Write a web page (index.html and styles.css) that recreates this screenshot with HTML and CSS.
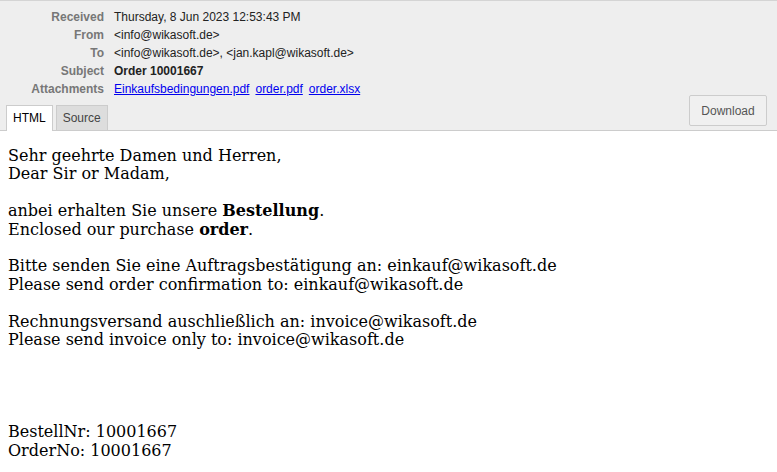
FILE: index.html
```html
<!DOCTYPE html>
<html lang="de">
<head>
<meta charset="utf-8">
<title>Order 10001667</title>
<link rel="stylesheet" href="styles.css">
</head>
<body>
<div class="header">
  <div class="fields">
    <div class="label">Received</div><div class="value">Thursday, 8 Jun 2023 12:53:43 PM</div>
    <div class="label">From</div><div class="value">&lt;info@wikasoft.de&gt;</div>
    <div class="label">To</div><div class="value">&lt;info@wikasoft.de&gt;, &lt;jan.kapl@wikasoft.de&gt;</div>
    <div class="label">Subject</div><div class="value subject">Order 10001667</div>
    <div class="label">Attachments</div><div class="value attachments"><a href="#">Einkaufsbedingungen.pdf</a><a href="#">order.pdf</a><a href="#">order.xlsx</a></div>
  </div>
  <div class="toolbar">
    <div class="tabs">
      <div class="tab active">HTML</div>
      <div class="tab">Source</div>
    </div>
    <button class="download">Download</button>
  </div>
</div>
<div class="message">
Sehr geehrte Damen und Herren,<br>
Dear Sir or Madam,<br>
<br>
anbei erhalten Sie unsere <b>Bestellung</b>.<br>
Enclosed our purchase <b>order</b>.<br>
<br>
Bitte senden Sie eine Auftragsbestätigung an: einkauf@wikasoft.de<br>
Please send order confirmation to: einkauf@wikasoft.de<br>
<br>
Rechnungsversand auschließlich an: invoice@wikasoft.de<br>
Please send invoice only to: invoice@wikasoft.de<br>
<br>
<br>
<br>
<br>
BestellNr: 10001667<br>
OrderNo: 10001667
</div>
</body>
</html>
```

FILE: styles.css
```css
html, body {
  margin: 0;
  padding: 0;
  background: #fff;
}

.header {
  background: #eeeeee;
  border-top: 1px solid #d4d4d4;
  border-bottom: 1px solid #cccccc;
  padding: 7px 10px 0 6px;
  font-family: "Liberation Sans", Arial, sans-serif;
  font-size: 12px;
}

.fields {
  display: grid;
  grid-template-columns: 98px 1fr;
  column-gap: 10px;
  grid-auto-rows: 18px;
  line-height: 18px;
}

.label {
  text-align: right;
  font-weight: bold;
  color: #777;
}

.value {
  color: #222;
}

.subject {
  font-weight: bold;
}

.attachments {
  display: flex;
  gap: 6px;
}

.attachments a {
  color: #0000ee;
  text-decoration: underline;
}

.toolbar {
  display: flex;
  justify-content: space-between;
  align-items: flex-end;
  margin-top: -3px;
}

.tabs {
  display: flex;
  align-items: flex-end;
  gap: 3px;
}

.tab {
  box-sizing: border-box;
  height: 25px;
  padding: 0 6px;
  line-height: 24px;
  border: 1px solid #cccccc;
  border-bottom: none;
  background: #dddddd;
  color: #444;
}

.tab.active {
  height: 26px;
  margin-bottom: -1px;
  line-height: 25px;
  background: #ffffff;
  color: #000;
}

.download {
  box-sizing: border-box;
  width: 78px;
  height: 31px;
  margin-bottom: 4px;
  border: 1px solid #cccccc;
  border-radius: 2px;
  background: #f0f0f0;
  color: #555;
  font-family: "Liberation Sans", Arial, sans-serif;
  font-size: 12px;
  padding: 0;
}

.message {
  padding: 16px 8px 8px 8px;
  font-family: "DejaVu Serif", serif;
  font-size: 16px;
  line-height: 18.4px;
  color: #000;
}
```
